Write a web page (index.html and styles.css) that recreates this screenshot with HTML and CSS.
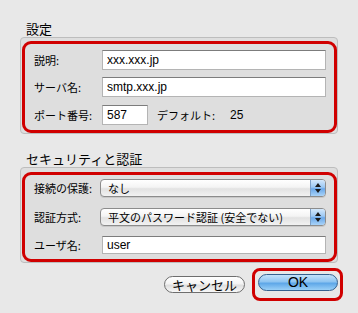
FILE: index.html
```html
<!DOCTYPE html>
<html lang="ja">
  <head>
    <meta charset="UTF-8" />
    <title>設定</title>
    <link rel="stylesheet" href="styles.css">
  </head>
  <body>
    <div class="dialog">

      <h2 class="section-title">設定</h2>
      <div class="group">
        <div class="mark">
          <div class="row row-gap1">
            <label class="label">説明:</label>
            <input class="field" type="text" value="xxx.xxx.jp">
          </div>
          <div class="row row-gap2">
            <label class="label">サーバ名:</label>
            <input class="field" type="text" value="smtp.xxx.jp">
          </div>
          <div class="row">
            <label class="label">ポート番号:</label>
            <input class="field port" type="text" value="587">
            <span class="default-label">デフォルト:</span>
            <span class="default-value">25</span>
          </div>
        </div>
      </div>

      <h2 class="section-title second">セキュリティと認証</h2>
      <div class="group group-second">
        <div class="mark mark-second">
          <div class="row short row-gap3">
            <label class="label">接続の保護:</label>
            <div class="popup">
              <span class="popup-text">なし</span>
              <span class="popup-arrows">
                <svg width="8" height="12" viewBox="0 0 8 12">
                  <path d="M4 1 L7 5 L1 5 Z" fill="#1a1a1a"/>
                  <path d="M1 7 L7 7 L4 11 Z" fill="#1a1a1a"/>
                </svg>
              </span>
            </div>
          </div>
          <div class="row short row-gap4">
            <label class="label">認証方式:</label>
            <div class="popup">
              <span class="popup-text">平文のパスワード認証 (安全でない)</span>
              <span class="popup-arrows">
                <svg width="8" height="12" viewBox="0 0 8 12">
                  <path d="M4 1 L7 5 L1 5 Z" fill="#1a1a1a"/>
                  <path d="M1 7 L7 7 L4 11 Z" fill="#1a1a1a"/>
                </svg>
              </span>
            </div>
          </div>
          <div class="row short">
            <label class="label">ユーザ名:</label>
            <input class="field" type="text" value="user">
          </div>
        </div>
      </div>

      <div class="buttons">
        <button class="btn cancel">キャンセル</button>
        <div class="ok-mark">
          <button class="btn ok">OK</button>
        </div>
      </div>

    </div>
  </body>
</html>
```

FILE: styles.css
```css
body {
  margin: 0;
  background-color: #e8e8e8;
  font-family: "Noto Sans CJK JP", "Liberation Sans", sans-serif;
  color: #000;
}

.dialog {
  padding: 20px 15px 0 20px;
}

.section-title {
  margin: 0 0 0 6px;
  height: 17px;
  line-height: 17px;
  font-size: 13px;
  font-weight: normal;
}
.section-title.second {
  margin-top: 16px;
}

.group {
  margin-right: 5px;
  border: 1px solid #bdbdbd;
  border-radius: 4px;
  background-color: #dedede;
  padding: 3px 0 0 1px;
}
.group-second {
  padding-top: 4px;
}

.mark {
  border: 3px solid #d00000;
  border-radius: 9px;
  padding: 6px 8px 5px 9px;
}
.mark-second {
  padding-top: 4px;
}

.row {
  display: flex;
  align-items: center;
  height: 20px;
}
.row.short {
  height: 18px;
}
.row-gap1 { margin-bottom: 7px; }
.row-gap2 { margin-bottom: 8px; }
.row-gap3 { margin-bottom: 11px; }
.row-gap4 { margin-bottom: 10px; }

.label {
  width: 68px;
  flex: none;
  font-size: 11px;
  line-height: 14px;
}

.field {
  flex: 1;
  box-sizing: border-box;
  height: 100%;
  margin: 0;
  padding: 0 4px;
  border: 1px solid #b4b4b4;
  border-top-color: #7c7c7c;
  background-color: #fff;
  font-family: "Liberation Sans", sans-serif;
  font-size: 12px;
  color: #000;
  outline: none;
}
.field.port {
  flex: none;
  width: 46px;
}

.default-label {
  margin-left: 9px;
  font-size: 11px;
}
.default-value {
  margin-left: 15px;
  font-family: "Liberation Sans", sans-serif;
  font-size: 12px;
}

.popup {
  flex: 1;
  display: flex;
  align-items: center;
  box-sizing: border-box;
  height: 18px;
  margin-left: -2px;
  border: 1px solid #8c8c8c;
  border-radius: 4px;
  overflow: hidden;
  background: linear-gradient(#ffffff 0%, #f4f4f4 45%, #e2e2e2 55%, #f2f2f2 100%);
  box-shadow: 0 1px 0 #c8c8c8;
}
.popup-text {
  flex: 1;
  padding-left: 7px;
  font-size: 11px;
  line-height: 16px;
  white-space: nowrap;
}
.popup-arrows {
  display: flex;
  align-items: center;
  justify-content: center;
  width: 14px;
  height: 100%;
  border-left: 1px solid #7d9fc6;
  background: linear-gradient(#d4e8fb 0%, #9cc8f3 45%, #6aa8ea 55%, #a9d3f8 100%);
}

.buttons {
  display: flex;
  justify-content: flex-end;
  align-items: center;
  margin-top: 5px;
}

.btn {
  box-sizing: border-box;
  height: 17px;
  margin: 0;
  padding: 0;
  border-radius: 9px;
  font-family: "Noto Sans CJK JP", "Liberation Sans", sans-serif;
  color: #000;
  cursor: pointer;
}
.cancel {
  width: 81px;
  margin-right: 7px;
  border: 1px solid #6e6e6e;
  background: linear-gradient(#ffffff 0%, #f3f3f3 45%, #dedede 55%, #f8f8f8 100%);
  font-size: 13px;
  line-height: 15px;
}
.ok-mark {
  border: 3px solid #d00000;
  border-radius: 8px;
  padding: 3px 2px 7px 3px;
}
.ok {
  display: block;
  width: 80px;
  border: 1px solid #35618f;
  background: linear-gradient(#c4e2fa 0%, #8ec4f1 45%, #5ea7e8 55%, #9ad0f7 100%);
  font-family: "Liberation Sans", sans-serif;
  font-size: 14px;
  line-height: 15px;
}
```
